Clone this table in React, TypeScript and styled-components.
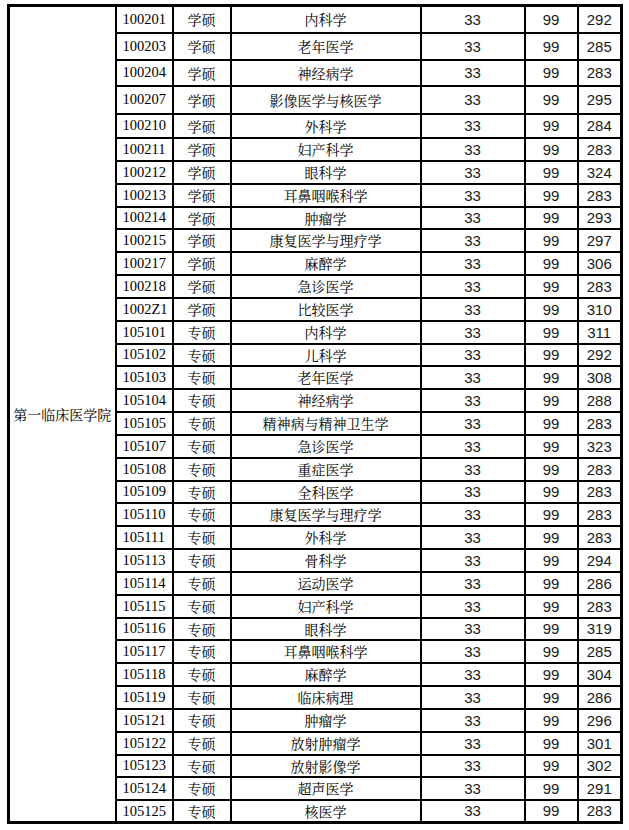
import styled, { createGlobalStyle } from "styled-components";

const GlobalStyle = createGlobalStyle`
  body {
    margin: 0;
    background: #fff;
  }
`;

const Page = styled.div`
  padding: 4px 0 0 7px;
`;

const Table = styled.table`
  border-collapse: collapse;
  table-layout: fixed;
  width: 616px;
  border: 3px solid #000;
  color: #000;
  font-family: "Noto Serif CJK SC", "Noto Sans CJK SC", sans-serif;
  font-size: 14px;
`;

const Row = styled.tr<{ $h: number }>`
  height: ${(p) => p.$h}px;
`;

const Cell = styled.td`
  border: 2px solid #000;
  padding: 0;
  text-align: center;
  vertical-align: middle;
  line-height: 1;
  white-space: nowrap;
  overflow: hidden;
`;

const SchoolCell = styled(Cell)`
  font-size: 14px;
`;

const CodeCell = styled(Cell)`
  font-family: "Liberation Serif", "Noto Serif CJK SC", "Noto Sans CJK SC", serif;
  font-size: 14.5px;
  text-align: left;
  padding-left: 6px;
`;

const NumCell = styled(Cell)`
  font-family: "Liberation Sans", Arial, sans-serif;
  font-size: 15px;
  color: #1a1a1a;
`;

// code, type, major, score
const rows: [string, string, string, number][] = [
  ["100201", "学硕", "内科学", 292],
  ["100203", "学硕", "老年医学", 285],
  ["100204", "学硕", "神经病学", 283],
  ["100207", "学硕", "影像医学与核医学", 295],
  ["100210", "学硕", "外科学", 284],
  ["100211", "学硕", "妇产科学", 283],
  ["100212", "学硕", "眼科学", 324],
  ["100213", "学硕", "耳鼻咽喉科学", 283],
  ["100214", "学硕", "肿瘤学", 293],
  ["100215", "学硕", "康复医学与理疗学", 297],
  ["100217", "学硕", "麻醉学", 306],
  ["100218", "学硕", "急诊医学", 283],
  ["1002Z1", "学硕", "比较医学", 310],
  ["105101", "专硕", "内科学", 311],
  ["105102", "专硕", "儿科学", 292],
  ["105103", "专硕", "老年医学", 308],
  ["105104", "专硕", "神经病学", 288],
  ["105105", "专硕", "精神病与精神卫生学", 283],
  ["105107", "专硕", "急诊医学", 323],
  ["105108", "专硕", "重症医学", 283],
  ["105109", "专硕", "全科医学", 283],
  ["105110", "专硕", "康复医学与理疗学", 283],
  ["105111", "专硕", "外科学", 283],
  ["105113", "专硕", "骨科学", 294],
  ["105114", "专硕", "运动医学", 286],
  ["105115", "专硕", "妇产科学", 283],
  ["105116", "专硕", "眼科学", 319],
  ["105117", "专硕", "耳鼻咽喉科学", 285],
  ["105118", "专硕", "麻醉学", 304],
  ["105119", "专硕", "临床病理", 286],
  ["105121", "专硕", "肿瘤学", 296],
  ["105122", "专硕", "放射肿瘤学", 301],
  ["105123", "专硕", "放射影像学", 302],
  ["105124", "专硕", "超声医学", 291],
  ["105125", "专硕", "核医学", 283],
];

const firstHeights = [27, 27, 26, 28, 24];
const shortRows = [8, 14, 20, 26, 32];

const rowHeight = (i: number) => {
  if (i < firstHeights.length) return firstHeights[i];
  return shortRows.includes(i) ? 22 : 23;
};

const widths = [107, 57, 58, 190, 104, 53, 44];

export default function App() {
  return (
    <Page>
      <GlobalStyle />
      <Table>
        <colgroup>
          {widths.map((w, i) => (
            <col key={i} style={{ width: w }} />
          ))}
        </colgroup>
        <tbody>
          {rows.map(([code, kind, major, score], i) => (
            <Row key={code} $h={rowHeight(i)}>
              {i === 0 && <SchoolCell rowSpan={rows.length}>第一临床医学院</SchoolCell>}
              <CodeCell>{code}</CodeCell>
              <Cell>{kind}</Cell>
              <Cell>{major}</Cell>
              <NumCell>33</NumCell>
              <NumCell>99</NumCell>
              <NumCell>{score}</NumCell>
            </Row>
          ))}
        </tbody>
      </Table>
    </Page>
  );
}
